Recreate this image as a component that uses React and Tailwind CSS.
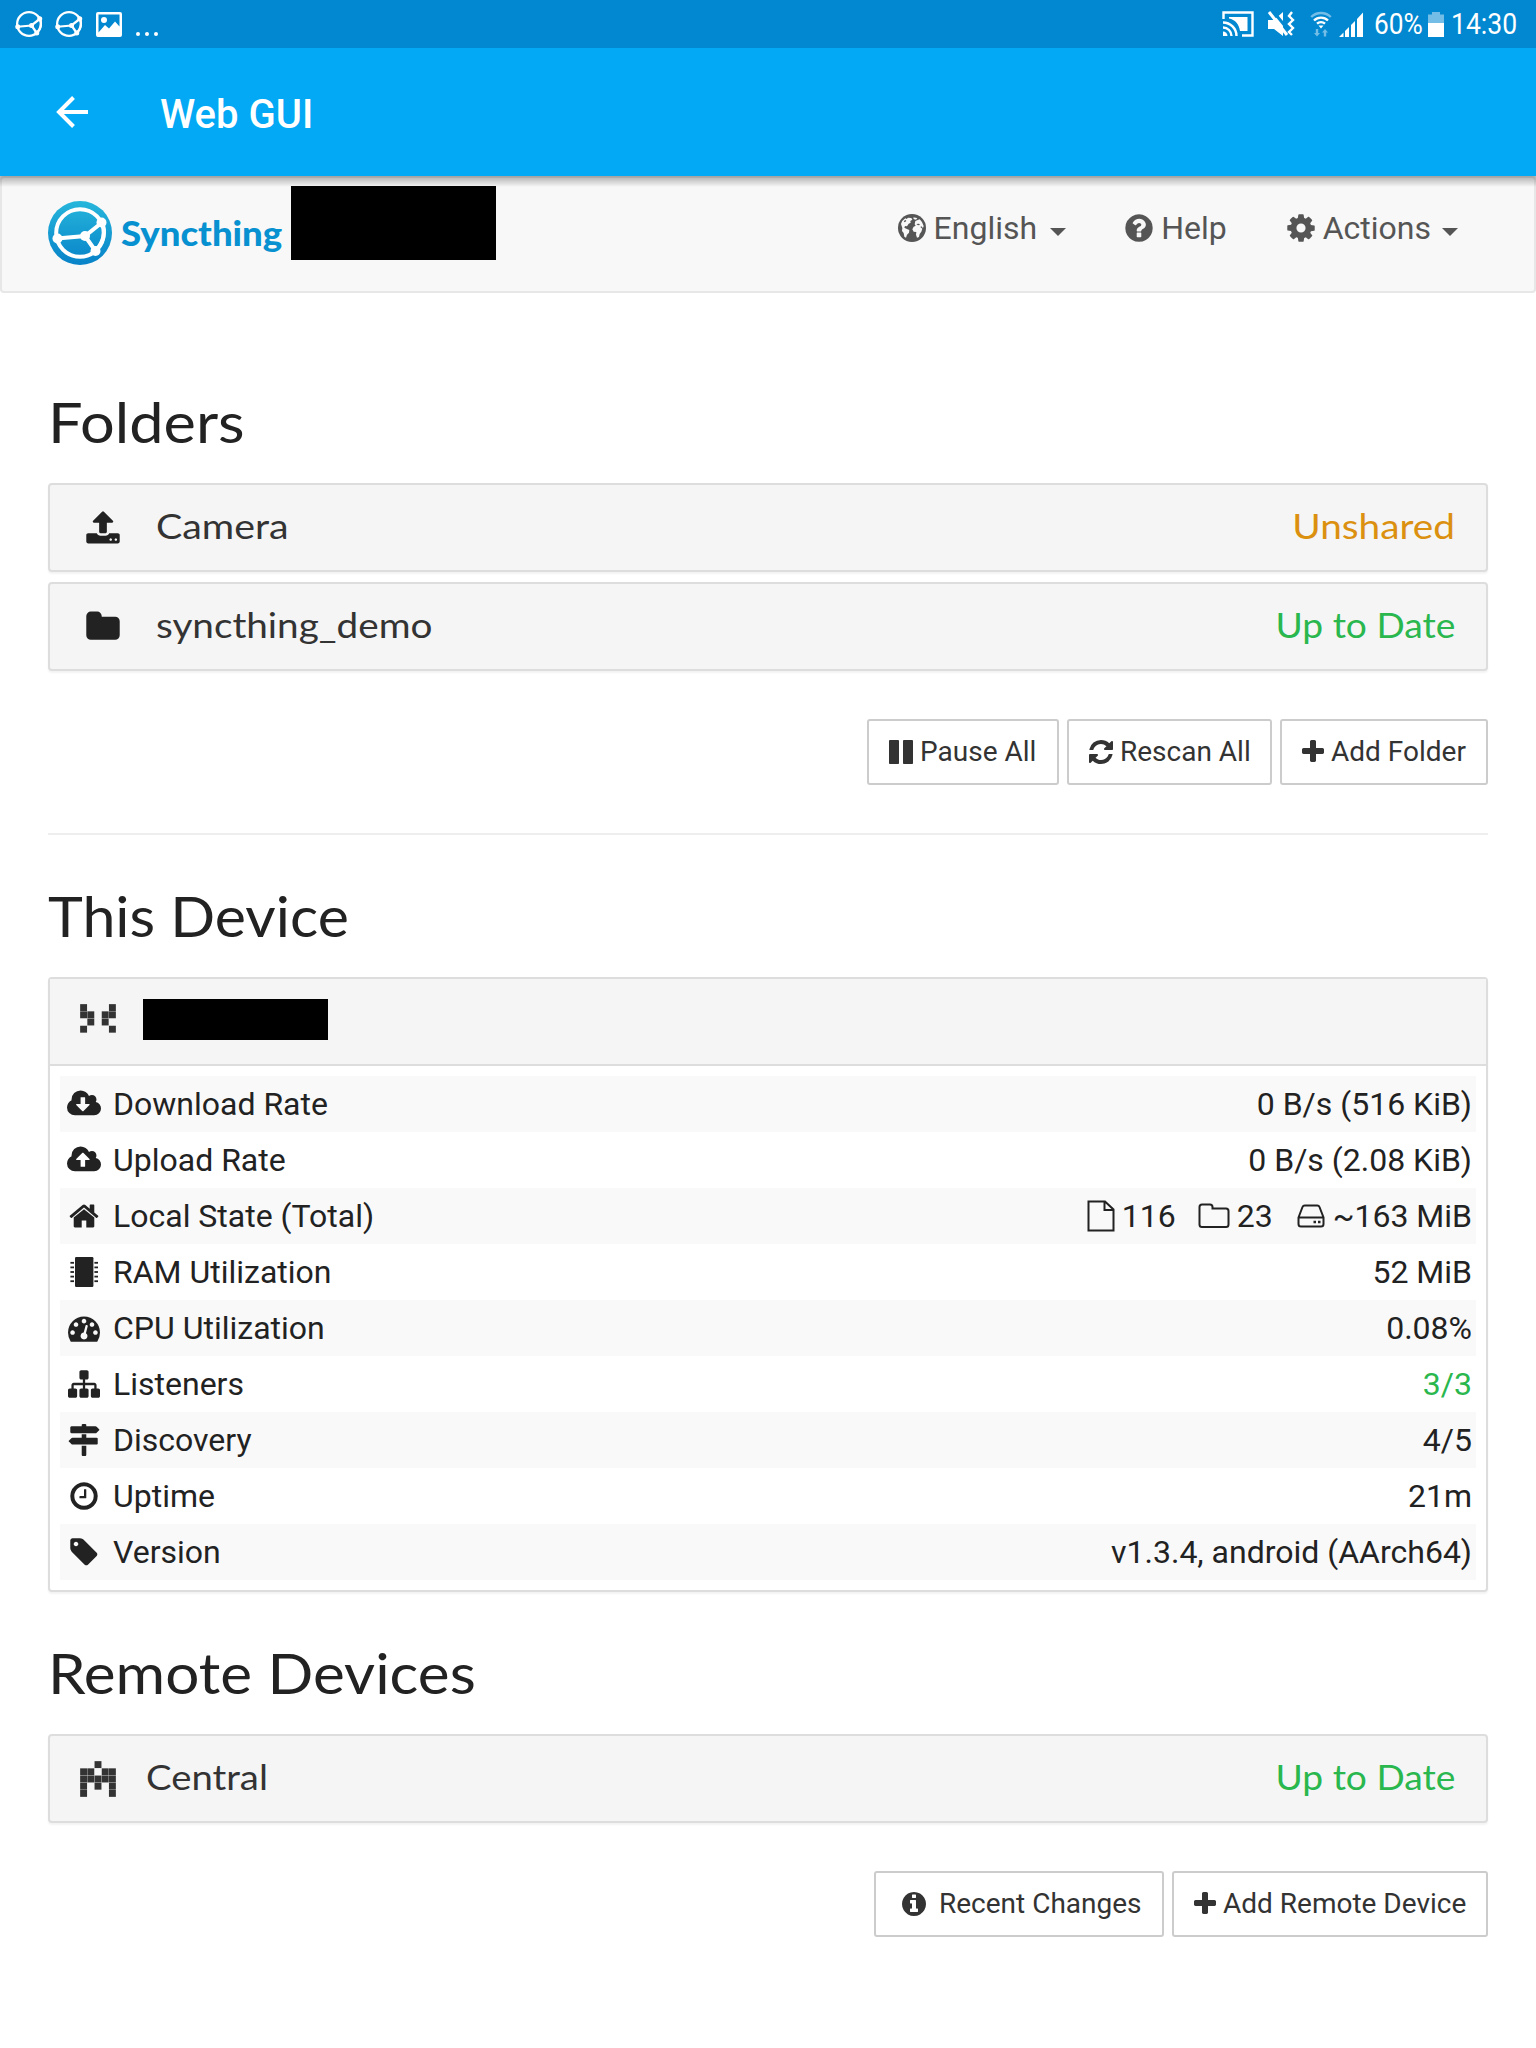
import React from "react";

const CIRCLE = "q0 209-103 385.5t-279.5 279.5-385.5 103-385.5-103-279.5-279.5-103-385.5 103-385.5 279.5-279.5 385.5-103 385.5 103 279.5 279.5 103 385.5z";
const CLOUD = "q0 159-112.5 271.5t-271.5 112.5h-1088q-185 0-316.5-131.5t-131.5-316.5q0-130 70-240t188-165q-2-30-2-43 0-212 150-362t362-150q156 0 285.5 87t188.5 231q71-62 166-62 106 0 181 75t75 181q0 76-41 138 130 31 213.5 135.5t83.5 238.5z";

const P = {
  home: "M1472 992v480q0 26-19 45t-45 19h-384v-384h-256v384h-384q-26 0-45-19t-19-45v-480q0-1 .5-3t.5-3l575-474 575 474q1 2 1 6zm223-69l-62 74q-8 9-21 11h-3q-13 0-21-7l-692-577-692 577q-12 8-24 7-13-2-21-11l-62-74q-8-10-7-23.5t11-21.5l719-599q32-26 76-26t76 26l244 204v-195q0-14 9-23t23-9h192q14 0 23 9t9 23v408l219 182q10 8 11 21.5t-7 23.5z",
  down: "M1216 928q0-14-9-23t-23-9h-224v-352q0-13-9.5-22.5t-22.5-9.5h-192q-13 0-22.5 9.5t-9.5 22.5v352h-224q-13 0-22.5 9.5t-9.5 22.5q0 14 9 23l352 352q9 9 23 9t23-9l351-351q10-12 10-24zm640 224" + CLOUD,
  up: "M1216 864q0-14-9-23l-352-352q-9-9-23-9t-23 9l-351 351q-10 12-10 24 0 14 9 23t23 9h224v352q0 13 9.5 22.5t22.5 9.5h192q13 0 22.5-9.5t9.5-22.5v-352h224q13 0 22.5-9.5t9.5-22.5zm640 288" + CLOUD,
  tach: "M384 1152q0-53-37.5-90.5t-90.5-37.5-90.5 37.5-37.5 90.5 37.5 90.5 90.5 37.5 90.5-37.5 37.5-90.5zm192-448q0-53-37.5-90.5t-90.5-37.5-90.5 37.5-37.5 90.5 37.5 90.5 90.5 37.5 90.5-37.5 37.5-90.5zm428 481l101-382q6-26-7.5-48.5t-38.5-29.5-48 6.5-30 39.5l-101 382q-60 5-107 43.5t-63 98.5q-20 77 20 146t117 89 146-20 89-117q16-60-6-117t-72-91zm660-33q0-53-37.5-90.5t-90.5-37.5-90.5 37.5-37.5 90.5 37.5 90.5 90.5 37.5 90.5-37.5 37.5-90.5zm-640-640q0-53-37.5-90.5t-90.5-37.5-90.5 37.5-37.5 90.5 37.5 90.5 90.5 37.5 90.5-37.5 37.5-90.5zm448 192q0-53-37.5-90.5t-90.5-37.5-90.5 37.5-37.5 90.5 37.5 90.5 90.5 37.5 90.5-37.5 37.5-90.5zm320 448q0 261-141 483-19 29-54 29h-1402q-35 0-54-29-141-221-141-483 0-182 71-348t191-286 286-191 348-71 348 71 286 191 191 286 71 348z",
  sitemap: "M1792 1248v320q0 40-28 68t-68 28h-320q-40 0-68-28t-28-68v-320q0-40 28-68t68-28h96v-192h-512v192h96q40 0 68 28t28 68v320q0 40-28 68t-68 28h-320q-40 0-68-28t-28-68v-320q0-40 28-68t68-28h96v-192h-512v192h96q40 0 68 28t28 68v320q0 40-28 68t-68 28h-320q-40 0-68-28t-28-68v-320q0-40 28-68t68-28h96v-192q0-52 38-90t90-38h512v-192h-96q-40 0-68-28t-28-68v-320q0-40 28-68t68-28h320q40 0 68 28t28 68v320q0 40-28 68t-68 28h-96v192h512q52 0 90 38t38 90v192h96q40 0 68 28t28 68z",
  signs: "M1745 297q10 10 10 23t-10 23l-141 141q-28 28-68 28h-1344q-26 0-45-19t-19-45v-256q0-26 19-45t45-19h576v-64q0-26 19-45t45-19h128q26 0 45 19t19 45v64h512q40 0 68 28zm-977 919h256v512q0 26-19 45t-45 19h-128q-26 0-45-19t-19-45v-512zm832-448q26 0 45 19t19 45v256q0 26-19 45t-45 19h-1344q-40 0-68-28l-141-141q-10-10-10-23t10-23l141-141q28-28 68-28h512v-192h256v192h576z",
  clock: "M1024 544v448q0 14-9 23t-23 9h-320q-14 0-23-9t-9-23v-64q0-14 9-23t23-9h224v-352q0-14 9-23t23-9h64q14 0 23 9t9 23zm416 352q0-148-73-273t-198-198-273-73-273 73-198 198-73 273 73 273 198 198 273 73 273-73 198-198 73-273zm224 0" + CIRCLE,
  tag: "M576 448q0-53-37.5-90.5t-90.5-37.5-90.5 37.5-37.5 90.5 37.5 90.5 90.5 37.5 90.5-37.5 37.5-90.5zm1067 576q0 53-37 90l-491 492q-39 37-91 37-53 0-90-37l-715-716q-38-37-64.5-101t-26.5-117v-416q0-52 38-90t90-38h416q53 0 117 26.5t102 64.5l715 714q37 39 37 91z",
  upload: "M1344 1472q0-26-19-45t-45-19-45 19-19 45 19 45 45 19 45-19 19-45zm256 0q0-26-19-45t-45-19-45 19-19 45 19 45 45 19 45-19 19-45zm128-224v320q0 40-28 68t-68 28h-1472q-40 0-68-28t-28-68v-320q0-40 28-68t68-28h427q21 56 70.5 92t110.5 36h256q61 0 110.5-36t70.5-92h427q40 0 68 28t28 68zm-325-648q-17 40-59 40h-256v448q0 26-19 45t-45 19h-256q-26 0-45-19t-19-45v-448h-256q-42 0-59-40-17-39 14-69l448-448q18-19 45-19t45 19l448 448q31 30 14 69z",
  folder: "M1728 608v704q0 92-66 158t-158 66h-1216q-92 0-158-66t-66-158v-960q0-92 66-158t158-66h320q92 0 158 66t66 158v32h672q92 0 158 66t66 158z",
  cog: "M1152 896q0-106-75-181t-181-75-181 75-75 181 75 181 181 75 181-75 75-181zm512-109v222q0 12-8 23t-20 13l-185 28q-19 54-39 91 35 50 107 138 10 12 10 25t-9 23q-27 37-99 108t-94 71q-12 0-26-9l-138-108q-44 23-91 38-16 136-29 186-7 28-36 28h-222q-14 0-24.5-8.5t-11.5-21.5l-28-184q-49-16-90-37l-141 107q-10 9-25 9-14 0-25-11-126-114-165-168-7-10-7-23 0-12 8-23 15-21 51-66.5t54-70.5q-27-50-41-99l-183-27q-13-2-21-12.5t-8-23.5v-222q0-12 8-23t19-13l186-28q14-46 39-92-40-57-107-138-10-12-10-24 0-10 9-23 26-36 98.5-107.5t94.5-71.5q13 0 26 10l138 107q44-23 91-38 16-136 29-186 7-28 36-28h222q14 0 24.5 8.5t11.5 21.5l28 184q49 16 90 37l142-107q9-9 24-9 13 0 25 10 129 119 165 170 7 8 7 22 0 12-8 23-15 21-51 66.5t-54 70.5q26 50 41 98l183 28q13 2 21 12.5t8 23.5z",
  help: "M1024 1376v-192q0-14-9-23t-23-9h-192q-14 0-23 9t-9 23v192q0 14 9 23t23 9h192q14 0 23-9t9-23zm256-672q0-88-55.5-163t-138.5-116-170-41q-243 0-371 213-15 24 8 42l132 100q7 6 19 6 16 0 25-12 53-68 86-92 34-24 86-24 48 0 85.5 26t37.5 59q0 38-20 61t-68 45q-63 28-115.5 86.5t-52.5 125.5v36q0 14 9 23t23 9h192q14 0 23-9t9-23q0-19 21.5-49.5t54.5-49.5q32-18 49-28.5t46-35 44.5-48 28-60.5 12.5-81zm384 192" + CIRCLE,
  info: "M1152 1376v-160q0-14-9-23t-23-9h-96v-512q0-14-9-23t-23-9h-320q-14 0-23 9t-9 23v160q0 14 9 23t23 9h96v320h-96q-14 0-23 9t-9 23v160q0 14 9 23t23 9h448q14 0 23-9t9-23zm-128-896v-160q0-14-9-23t-23-9h-192q-14 0-23 9t-9 23v160q0 14 9 23t23 9h192q14 0 23-9t9-23zm640 416" + CIRCLE,
  refresh: "M1639 1056q0 5-1 7-64 268-268 434.5t-478 166.5q-146 0-282.5-55t-243.5-157l-129 129q-19 19-45 19t-45-19-19-45v-448q0-26 19-45t45-19h448q26 0 45 19t19 45-19 45l-137 137q71 66 161 102t187 36q134 0 250-65t186-179q11-17 53-117 8-23 30-23h192q13 0 22.5 9.5t9.5 22.5zm25-800v448q0 26-19 45t-45 19h-448q-26 0-45-19t-19-45 19-45l138-138q-148-137-349-137-134 0-250 65t-186 179q-11 17-53 117-8 23-30 23h-199q-13 0-22.5-9.5t-9.5-22.5v-7q65-268 270-434.5t480-166.5q146 0 284 55.5t245 156.5l130-129q19-19 45-19t45 19 19 45z",
  pause: "M1664 192v1408q0 26-19 45t-45 19h-512q-26 0-45-19t-19-45v-1408q0-26 19-45t45-19h512q26 0 45 19t19 45zm-896 0v1408q0 26-19 45t-45 19h-512q-26 0-45-19t-19-45v-1408q0-26 19-45t45-19h512q26 0 45 19t19 45z",
  plus: "M1600 736v192q0 40-28 68t-68 28h-416v416q0 40-28 68t-68 28h-192q-40 0-68-28t-28-68v-416h-416q-40 0-68-28t-28-68v-192q0-40 28-68t68-28h416v-416q0-40 28-68t68-28h192q40 0 68 28t28 68v416h416q40 0 68 28t28 68z",
};

function Icon({ name, className = "size-8", box = "0 0 1792 1792" }) {
  return (
    <svg viewBox={box} className={`${className} shrink-0 overflow-visible`} fill="currentColor">
      <path d={P[name]} />
    </svg>
  );
}

function GlobeIcon() {
  return (
    <svg viewBox="18 65 96 96" className="size-8 shrink-0">
      <circle cx="66" cy="113" r="42" fill="#555" />
      <g fill="#f8f8f8">
        <path d="M33 101q4-12 13-17l4 2 4-4 10 1 3 5-6 4 1 5-6 3-5 8-6-1-2 5 6 3 9 4-1 8-6 6-3 9-5-3-2-11-5-6 1-9z" />
        <path d="M69 82q8-1 13 2l-4 4-6-1zM76 92l7-3 6-2q9 8 12 20l-2 6-5-5-3 2 6 5-3 9-5 7-2 9-6 2-3-9 1-8-8-1-4-7 4-8 6-3-3-4z" />
      </g>
      <path d="M79 101l8-1 3 4-6 1zM41 92l6-3 2 3-5 4z" fill="#555" />
    </svg>
  );
}

function ChipIcon() {
  return (
    <svg viewBox="0 0 32 32" className="size-8 shrink-0" fill="currentColor">
      <rect x="7" y="1" width="18.4" height="30" rx="1.2" />
      {[6.8, 11.4, 16, 20.6, 25.2].map((y) => (
        <g key={y}>
          <rect x="2.4" y={y - 0.9} width="3.6" height="1.8" />
          <rect x="26.4" y={y - 0.9} width="3.6" height="1.8" />
        </g>
      ))}
    </svg>
  );
}

function Mark({ className, w = 4 }) {
  return (
    <svg viewBox="0 0 64 64" className={className} fill="none" stroke="white" strokeWidth={w} strokeLinecap="round">
      <circle cx="32" cy="32" r="23.8" />
      <path d="M9 37.5 37 35 54 21.5M37 35 47.5 50M54 21.5Q60 36 47.5 50" />
      <g fill="white" stroke="none">
        <circle cx="9.500" cy="37.500" r="5" />
        <circle cx="37" cy="35" r="5" />
        <circle cx="53.500" cy="21.500" r="5" />
        <circle cx="47.500" cy="50" r="5" />
      </g>
    </svg>
  );
}

function Identicon({ cells }) {
  return (
    <svg viewBox="0 0 5 5" className="size-9 shrink-0" fill="#333">
      {cells.flatMap((row, y) =>
        [...row].map((c, x) => (c === "#" ? <rect key={`${x}-${y}`} x={x + 0.02} y={y + 0.02} width="0.96" height="0.96" /> : null))
      )}
    </svg>
  );
}

function StatusIcons() {
  return (
    <div className="flex items-center pr-[19px]">
      <svg viewBox="0 0 32 26" className="h-[26px] w-8" fill="none" stroke="white" strokeWidth="2.4">
        <path d="M1.500 8V1.500h29v23H20" />
        <path d="M7 6h18.500v14H18C17 13 13 8.500 7 7.500z" fill="white" stroke="none" />
        <path d="M1 11.500A13.500 13.500 0 0 1 14.500 25M1 16.500A8.500 8.500 0 0 1 9.500 25" />
        <path d="M1 20.500A4.500 4.500 0 0 1 5.500 25H1z" fill="white" stroke="none" />
      </svg>
      <svg viewBox="0 0 28 26" className="ml-[13px] h-[26px] w-7" fill="white">
        <path d="M1 9h6l9-8v24l-9-7H1z" />
        <path d="M5 -1l18 22" stroke="#0288d1" strokeWidth="3" />
        <path d="M2 1l18 23" stroke="white" strokeWidth="3" />
        <path d="M25 1l-3 4 4 4-4 4 4 4-4 4 3 3" fill="none" stroke="white" strokeWidth="2.400" />
      </svg>
      <svg viewBox="0 0 22 26" className="ml-[15px] h-[26px] w-[22px]" fill="none" stroke="white" strokeWidth="2.400">
        <path d="M1.200 6a14 14 0 0 1 19.600 0" opacity=".45" />
        <path d="M4 9.500a10 10 0 0 1 14 0M7 12.700a6 6 0 0 1 8 0" />
        <path d="M8.500 14.500h5L11 17.500z" fill="white" stroke="none" />
        <g fill="white" stroke="none" opacity=".45">
          <path d="M5.800 18h2.400v4H10l-3 3.500L4 22h1.800zM13.800 25.500h2.400v-4H18L15 18l-3 3.500h1.800z" />
        </g>
      </svg>
      <svg viewBox="0 0 25 25" className="ml-[7px] h-[25px] w-[25px]" fill="white">
        <path d="M0 25l4.500-4.500V25zM6 19l4-4v10H6zM12 13l4-4v16h-4zM18 7l6-6.500V25h-6z" />
      </svg>
      <div className="ml-[10px] flex h-12 w-[51px] items-center pb-0.5 text-[30px]">
        <span className="origin-left scale-x-[0.875]">60%</span>
      </div>
      <svg viewBox="0 0 16 25" className="ml-[3px] h-[25px] w-4" fill="white">
        <path d="M0 2.500h4V0h8v2.500h4V11H0z" opacity=".45" />
        <path d="M0 11h16v14H0z" />
      </svg>
      <div className="ml-[7px] flex h-12 w-[66px] items-center pb-0.5 text-[30px]">
        <span className="origin-left scale-x-[0.885]">14:30</span>
      </div>
    </div>
  );
}

function Caret() {
  return <span className="mt-[7px] border-x-8 border-t-8 border-x-transparent border-t-[#555]" />;
}

function Title({ children, className }) {
  return (
    <h2 className={`mb-[30px] w-fit origin-left font-[Lato,sans-serif] text-[56px] leading-[62px] text-[#222] ${className}`}>
      {children}
    </h2>
  );
}

function Entry({ icon, name, nameClass, status, statusClass, className = "" }) {
  return (
    <div className={`flex h-[89px] items-center rounded-[4px] border-2 border-[#ddd] bg-[#f5f5f5] font-[Lato,sans-serif] text-[35px] shadow-[0_2px_2px_rgba(0,0,0,0.05)] ${className}`}>
      {icon}
      <span className={`origin-left pb-1 text-[#333] ${nameClass}`}>{name}</span>
      <span className={`mr-[31px] ml-auto origin-right pb-1 ${statusClass}`}>{status}</span>
    </div>
  );
}

function Button({ icon, children, className }) {
  return (
    <button className={`flex h-[66px] items-center rounded-[3px] border-2 border-[#ccc] bg-white text-[28px] text-[#333] ${className}`}>
      <Icon name={icon} className="size-7" />
      <span>{children}</span>
    </button>
  );
}

function Row({ icon, label, children, shaded }) {
  return (
    <div className={`flex h-14 items-center pr-1 pl-1 ${shaded ? "bg-[#f9f9f9]" : ""}`}>
      <div className="flex w-10 shrink-0 justify-center">{icon}</div>
      <span className="ml-[9px]">{label}</span>
      <div className="ml-auto flex items-center">{children}</div>
    </div>
  );
}

export default function App() {
  return (
    <div className="flex h-[2048px] w-[1536px] flex-col overflow-hidden bg-white font-[Roboto,sans-serif] text-[#222]">
      <div className="flex h-12 shrink-0 items-center justify-between bg-[#0288d1] text-white">
        <div className="flex items-center pl-[13px]">
          <Mark className="size-8" w={4.5} />
          <Mark className="ml-2 size-8" w={4.5} />
          <svg viewBox="0 0 26 25" className="ml-[11px] h-[25px] w-[26px]" fill="white">
            <path fillRule="evenodd" d="M2 0h22a2 2 0 0 1 2 2v21a2 2 0 0 1-2 2H2a2 2 0 0 1-2-2V2a2 2 0 0 1 2-2zm.5 2.500v18L9 13l4 3.500 6-7 4.500 5V2.500zM8 5a3 3 0 1 1 0 6 3 3 0 0 1 0-6z" />
          </svg>
          <div className="mt-5 ml-[14px] flex gap-[5px]">
            <span className="size-1 rounded-full bg-white" />
            <span className="size-1 rounded-full bg-white" />
            <span className="size-1 rounded-full bg-white" />
          </div>
        </div>
        <StatusIcons />
      </div>

      <header className="flex h-32 shrink-0 items-center bg-[#03a9f4] pl-14 text-white">
        <svg viewBox="0 0 32 32" className="size-8" fill="none" stroke="white" strokeWidth="4">
          <path d="M32 16H4M17.500 1.500 3 16l14.500 14.500" />
        </svg>
        <h1 className="mt-[6px] ml-[72px] text-[40px] leading-none font-medium">Web GUI</h1>
      </header>

      <nav className="relative flex h-[117px] shrink-0 items-start rounded-[4px] border-2 border-[#e7e7e7] bg-[#f8f8f8] pr-[76px] pl-[46px] text-[#555]">
        <div className="absolute -inset-x-0.5 -top-0.5 h-[11px] bg-gradient-to-b from-black/30 to-transparent" />
        <div className="mt-[23px] size-16 rounded-full bg-gradient-to-b from-[#26b6db] to-[#0882c8]">
          <Mark className="size-16" />
        </div>
        <span className="mt-[33px] ml-[9px] w-[161px] origin-left scale-x-[1.075] font-[Lato,sans-serif] text-[34px] leading-[44px] font-black text-[#0891d1]">Syncthing</span>
        <div className="mt-2 ml-[9px] h-[74px] w-[205px] bg-black" />
        <div className="mt-[27px] ml-auto flex h-[46px] items-center text-[32px]">
          <GlobeIcon />
          <span className="ml-[6px]">English</span>
          <span className="ml-[13px] flex"><Caret /></span>
          <Icon name="help" className="ml-[57px] size-8" />
          <span className="ml-[6px]">Help</span>
          <Icon name="cog" className="ml-[58px] size-8" />
          <span className="ml-[6px]">Actions</span>
          <span className="ml-[11px] flex"><Caret /></span>
        </div>
      </nav>

      <main className="flex flex-col px-12">
        <Title className="mt-[98px] scale-x-[1.095]">Folders</Title>
        <Entry
          name="Camera"
          nameClass="scale-x-[1.124]"
          status="Unshared"
          statusClass="scale-x-[1.107] text-[#db9010]"
          icon={<Icon name="upload" className="mr-[35px] ml-[35px] size-9" />}
        />
        <Entry
          className="mt-[10px]"
          name="syncthing_demo"
          nameClass="scale-x-[1.105]"
          status="Up to Date"
          statusClass="scale-x-[1.062] text-[#29b74e]"
          icon={<Icon name="folder" className="mr-[35px] ml-[35px] size-9" />}
        />
        <div className="mt-12 flex justify-end gap-2">
          <Button icon="pause" className="w-[192px] gap-[5px] pl-[18px]">Pause All</Button>
          <Button icon="refresh" className="w-[205px] gap-[5px] pl-[18px]">Rescan All</Button>
          <Button icon="plus" className="w-[208px] gap-[4px] pl-[17px]">Add Folder</Button>
        </div>
        <div className="mt-12 h-[2px] bg-[#eee]" />

        <Title className="mt-[50px] scale-x-[1.055]">This Device</Title>
        <section className="h-[615px] rounded-[4px] border-2 border-[#ddd] bg-white shadow-[0_2px_2px_rgba(0,0,0,0.05)]">
          <div className="flex h-[87px] items-start border-b-2 border-[#ddd] bg-[#f5f5f5] pl-[30px]">
            <div className="mt-[25px]">
              <Identicon cells={["#...#", "##.##", ".#.#.", "#...#", "....."]} />
            </div>
            <div className="mt-5 ml-[27px] h-[41px] w-[185px] bg-black" />
          </div>
          <div className="px-[10px] pt-[10px] text-[32px]">
            <Row shaded icon={<Icon name="down" className="h-8 w-[34px]" box="-64 0 1920 1792" />} label="Download Rate">0 B/s (516 KiB)</Row>
            <Row icon={<Icon name="up" className="h-8 w-[34px]" box="-64 0 1920 1792" />} label="Upload Rate">0 B/s (2.08 KiB)</Row>
            <Row shaded icon={<Icon name="home" />} label="Local State (Total)">
              <svg viewBox="0 0 28 32" className="h-8 w-7" fill="none" stroke="currentColor" strokeWidth="2">
                <path d="M1.500 1.500H18l8.500 8V30.500h-25zM17.500 1.500V10h9" />
              </svg>
              <span className="ml-[7px]">116</span>
              <svg viewBox="0 0 32 26" className="ml-[22px] h-[26px] w-8" fill="none" stroke="currentColor" strokeWidth="2">
                <path d="M4 1.500h8q2.500 0 2.500 2.500v1.500H28q2.500 0 2.500 2.500v13.500q0 2.500-2.500 2.500H4q-2.500 0-2.500-2.500V4q0-2.500 2.500-2.500z" />
              </svg>
              <span className="ml-[7px]">23</span>
              <svg viewBox="0 0 28 24" className="ml-6 h-6 w-7" fill="none" stroke="currentColor" strokeWidth="2">
                <path d="M1.500 13.500 5.500 3q.6-1.500 2.200-1.500h12.600q1.600 0 2.200 1.500l4 10.500V20q0 2.500-2.500 2.500H4q-2.500 0-2.500-2.500zh25" />
                <path d="M16.500 18h2.500M21 18h2.500" strokeWidth="2.600" />
              </svg>
              <span className="ml-2">~163 MiB</span>
            </Row>
            <Row icon={<ChipIcon />} label="RAM Utilization">52 MiB</Row>
            <Row shaded icon={<Icon name="tach" />} label="CPU Utilization">0.08%</Row>
            <Row icon={<Icon name="sitemap" />} label="Listeners"><span className="text-[#29b74e]">3/3</span></Row>
            <Row shaded icon={<Icon name="signs" />} label="Discovery">4/5</Row>
            <Row icon={<Icon name="clock" />} label="Uptime">21m</Row>
            <Row shaded icon={<Icon name="tag" />} label="Version">v1.3.4, android (AArch64)</Row>
          </div>
        </section>

        <Title className="mt-[50px] scale-x-[1.076]">Remote Devices</Title>
        <Entry
          name="Central"
          nameClass="scale-x-[1.094]"
          status="Up to Date"
          statusClass="scale-x-[1.062] text-[#29b74e]"
          icon={
            <div className="mr-[30px] ml-[30px]">
              <Identicon cells={["..#..", "##.##", "#####", "#.#.#", "#...#"]} />
            </div>
          }
        />
        <div className="mt-12 flex justify-end gap-2">
          <Button icon="info" className="w-[290px] gap-[11px] pl-6">Recent Changes</Button>
          <Button icon="plus" className="w-[316px] gap-[4px] pl-[17px]">Add Remote Device</Button>
        </div>
      </main>
    </div>
  );
}
